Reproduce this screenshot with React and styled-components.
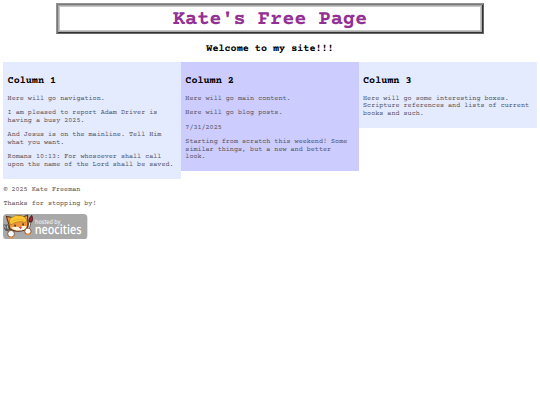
import React from "react";
import styled, { createGlobalStyle } from "styled-components";

const GlobalStyle = createGlobalStyle`
  * {
    box-sizing: border-box;
  }
  body {
    margin: 3.375px;
    background: #fff;
    color: #000;
    font-family: "Courier Prime", "Nimbus Mono PS", FreeMono, "Liberation Mono", "Courier New", monospace;
    font-size: 6.75px;
    line-height: 7.6px;
    text-rendering: geometricPrecision;
  }
`;

export default function App() {
  return (
    <>
      <GlobalStyle />
      <Banner>
        <h1>Kate's Free Page</h1>
      </Banner>
      <Welcome>Welcome to my site!!!</Welcome>
      <Row>
        <Column>
          <Heading>Column 1</Heading>
          <Text>Here will go navigation.</Text>
          <Text>I am pleased to report Adam Driver is having a busy 2025.</Text>
          <Text>And Jesus is on the mainline. Tell Him what you want.</Text>
          <Text>
            Romans 10:13: For whosoever shall call upon the name of the Lord
            shall be saved.
          </Text>
        </Column>
        <Column $color="#ccccff">
          <Heading>Column 2</Heading>
          <Text>Here will go main content.</Text>
          <Text>Here will go blog posts.</Text>
          <Text>7/31/2025</Text>
          <Text>
            Starting from scratch this weekend! Some similar things, but a new
            and better look.
          </Text>
        </Column>
        <Column>
          <Heading>Column 3</Heading>
          <Text>
            Here will go some interesting boxes. Scripture references and lists
            of current books and such.
          </Text>
        </Column>
      </Row>
      <Footer>
        <Text>© 2025 Kate Freeman</Text>
        <Text>Thanks for stopping by!</Text>
        <NeocitiesBadge />
      </Footer>
    </>
  );
}

function NeocitiesBadge() {
  return (
    <Badge viewBox="0 0 200 60">
      <rect width="200" height="60" rx="9" fill="#a8a8a8" />
      {/* fork */}
      <path
        d="M3 25 L5 34 Q7 39 13 38 Q17 34 14 27 M9 25 L11 35 L21 49"
        fill="none"
        stroke="#555"
        strokeWidth="5"
      />
      <path d="M3 27 L6 34 M10 27 L12 36 M14 39 L21 48" stroke="#ddd" strokeWidth="2" />
      {/* brush */}
      <path d="M65 16 L58 42" stroke="#4a3024" strokeWidth="6" />
      <path d="M64 20 L59 40" stroke="#eee" strokeWidth="3" />
      <path d="M61 17 Q62 8 68 3 Q73 12 68 19 Z" fill="#9b2430" stroke="#4c1c1e" strokeWidth="2" />
      {/* cat */}
      <path
        d="M14 25 L8 6 L25 9 Q35 1 47 7 L58 3 L59 23 Q60 38 43 40 Q22 43 15 33 Z"
        fill="#f0953a"
        stroke="#5a3216"
        strokeWidth="2.5"
      />
      <path
        d="M17 23 Q12 10 22 8 Q29 1 40 4 Q52 4 56 15 L53 20 Q36 14 18 26 Z"
        fill="#fbc832"
        stroke="#a8751f"
        strokeWidth="1.5"
      />
      <path d="M22 17 Q34 9 50 14" fill="none" stroke="#dfa02a" strokeWidth="1.5" />
      <path d="M19 32 Q28 29 36 31 Q47 27 56 29 Q54 38 43 39 Q26 41 19 32 Z" fill="#fff4e6" />
      <path d="M28 25 L29 30 M47 22 L48 27" stroke="#2b1a14" strokeWidth="3" />
      <path d="M37 31 Q41 29 45 30 L42 36 Z" fill="#b5433b" />
      <circle cx="19" cy="47" r="8" fill="#fff" stroke="#6b4428" strokeWidth="2" />
      <circle cx="59" cy="41" r="7.5" fill="#fff" stroke="#6b4428" strokeWidth="2" />
      <path d="M14 54 Q20 59 26 53" fill="none" stroke="#ec8b2e" strokeWidth="3" />
      <path d="M54 47 Q60 51 65 45" fill="none" stroke="#ec8b2e" strokeWidth="3" />
      <BadgeText x="76" y="23" fontSize="15" textLength="60" lengthAdjust="spacingAndGlyphs">
        hosted by
      </BadgeText>
      <BadgeText
        x="75"
        y="47.5"
        fontSize="31"
        textLength="111"
        lengthAdjust="spacingAndGlyphs"
        $bold
      >
        neocities
      </BadgeText>
    </Badge>
  );
}

const Banner = styled.header`
  width: 428px;
  height: 31px;
  margin: 0 auto;
  padding-top: 5px;
  border: 1px solid;
  border-color: #929292 #666 #666 #929292;
  box-shadow: inset 1px 1px #7a7a7a, inset -1px -1px #333,
    inset 2px 2px #aaa, inset -2px -2px #aaa, inset 0 0 0 3px #c6c6c6;
  text-align: center;
  h1 {
    margin: 0;
    color: #923096;
    font-size: 20.25px;
    line-height: 22.8px;
  }
`;

const Heading = styled.h2`
  margin: 8.4px 0 8.9px;
  font-size: 10.125px;
  line-height: 11.4px;
`;

const Welcome = styled(Heading)`
  margin: 9.6px 0 6.6px;
  text-align: center;
`;

const Row = styled.main`
  display: flex;
  align-items: flex-start;
`;

const Column = styled.section`
  width: 33.333%;
  padding: 5.22px 4.22px 2.72px;
  background: ${({ $color }) => $color || "#e5ebff"};
`;

const Text = styled.p`
  margin: 6.75px 0;
  color: #555560;
`;

const Footer = styled.footer`
  padding-top: 1.5px;
  ${Text} {
    color: #555;
  }
`;

const Badge = styled.svg`
  display: block;
  width: 84.4px;
  height: 25.3px;
  margin-top: -1.5px;
  overflow: visible;
`;

const BadgeText = styled.text`
  fill: #fff;
  font-family: "Open Sans", "Noto Sans", sans-serif;
  font-weight: ${({ $bold }) => ($bold ? 600 : 400)};
`;
